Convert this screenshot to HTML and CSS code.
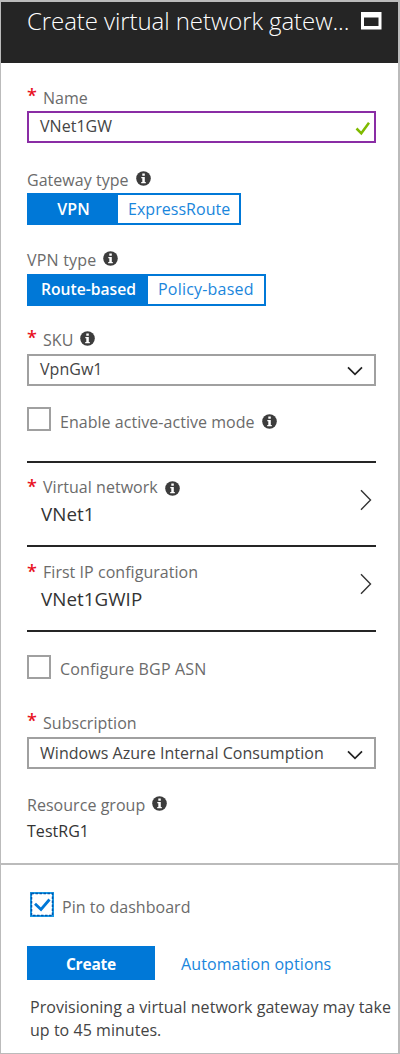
FILE: index.html
```html
<!DOCTYPE html>
<html lang="en">
<head>
<meta charset="utf-8">
<title>Create virtual network gateway</title>
<link rel="stylesheet" href="styles.css">
</head>
<body>
<svg class="defs" width="0" height="0">
  <symbol id="info" viewBox="0 0 15 15"><circle cx="7.5" cy="7.5" r="7.3" fill="#3c3c3c"/><path d="M6.3 2.600h2.500v2.100H6.300zM5.300 6h3.500v5h1v1.200H5.200V11h1.100V7.200h-1z" fill="#fff"/></symbol>
  <symbol id="down" viewBox="0 0 16 10"><path d="M1 1.300l7 7 7-7" fill="none" stroke="#222" stroke-width="1.7"/></symbol>
  <symbol id="right" viewBox="0 0 12 22"><path d="M1 1.200L10.500 11 1 20.700" fill="none" stroke="#333" stroke-width="1.4"/></symbol>
</svg>
<div class="blade">
  <header class="header">
    <h1 class="title">Create virtual network gatew...</h1>
    <svg class="maximize" width="21" height="18" viewBox="0 0 21 18"><path fill-rule="evenodd" d="M0 0h20.500v17.500H0zM3 5.500v8.500h14.500V5.500z" fill="#fff"/></svg>
  </header>
  <main class="form">
    <section class="field name">
      <div class="label required"><i class="star">*</i><span>Name</span></div>
      <div class="box active"><span>VNet1GW</span><svg class="valid" width="15" height="14" viewBox="0 0 15 14"><path d="M1.500 6.500l4.800 4.800L14 .8" fill="none" stroke="#7fba00" stroke-width="2.5"/></svg></div>
    </section>
    <section class="field gateway">
      <div class="label"><span>Gateway type</span><svg class="info"><use href="#info"/></svg></div>
      <div class="toggle"><b class="on vpn">VPN</b><span class="off">ExpressRoute</span></div>
    </section>
    <section class="field vpntype">
      <div class="label"><span class="wide">VPN type</span><svg class="info"><use href="#info"/></svg></div>
      <div class="toggle"><b class="on route">Route-based</b><span class="off wide">Policy-based</span></div>
    </section>
    <section class="field sku">
      <div class="label required"><i class="star">*</i><span>SKU</span><svg class="info"><use href="#info"/></svg></div>
      <div class="box"><span>VpnGw1</span><svg class="down"><use href="#down"/></svg></div>
    </section>
    <div class="check active-mode"><i class="tick"></i><span>Enable active-active mode</span><svg class="info"><use href="#info"/></svg></div>
    <div class="pickers">
      <section class="picker">
        <div class="picker-text">
          <div class="label required"><i class="star">*</i><span>Virtual network</span><svg class="info low"><use href="#info"/></svg></div>
          <div class="value">VNet1</div>
        </div>
        <svg class="right"><use href="#right"/></svg>
      </section>
      <section class="picker second">
        <div class="picker-text">
          <div class="label required"><i class="star">*</i><span>First IP configuration</span></div>
          <div class="value">VNet1GWIP</div>
        </div>
        <svg class="right"><use href="#right"/></svg>
      </section>
    </div>
    <div class="check bgp"><i class="tick"></i><span>Configure BGP ASN</span></div>
    <section class="field subscription">
      <div class="label required"><i class="star">*</i><span>Subscription</span></div>
      <div class="box"><span>Windows Azure Internal Consumption</span><svg class="down"><use href="#down"/></svg></div>
    </section>
    <section class="field group">
      <div class="label"><span>Resource group</span><svg class="info"><use href="#info"/></svg></div>
      <div class="static">TestRG1</div>
    </section>
  </main>
  <footer class="footer">
    <div class="check pin"><svg class="pinned" width="24" height="25" viewBox="0 0 24 25"><path d="M1 1h22v23H1z" fill="#fff" stroke="#1a9be6" stroke-width="2"/><path d="M1.500 1.500h21v22h-21z" fill="none" stroke="#0058b0" stroke-width="1.500" stroke-dasharray="2.500 1.500"/><path d="M5 11.800l6 5.700L19.500 7.500" fill="none" stroke="#0078d7" stroke-width="2.800"/></svg><span>Pin to dashboard</span></div>
    <div class="actions"><b class="create">Create</b><span class="link">Automation options</span></div>
    <p class="note">Provisioning a virtual network gateway may take<br>up to 45 minutes.</p>
  </footer>
</div>
</body>
</html>
```
FILE: styles.css
```css
* { box-sizing: border-box; }
body { margin: 0; background: #fff; font: 370 16px/20px "Open Sans", "Noto Sans", sans-serif; letter-spacing: 0.04px; color: #333; }
.defs { display: block; height: 0; }
.blade { width: 400px; height: 1054px; border: solid #bbb; border-width: 2px 2px 1px 1px; overflow: hidden; white-space: nowrap; }
.header { display: flex; height: 61px; background: #252525; padding: 0 16px 0 26px; justify-content: space-between; }
.title { margin: 2px 0 0; font-size: 24px; line-height: 34px; font-weight: 320; letter-spacing: -0.08px; color: #fff; }
.maximize { margin-top: 10px; flex: none; }
.form { height: 800px; padding: 25px 22px 0 26px; }
.field { display: flex; flex-direction: column; height: 56px; justify-content: space-between; }
.label { display: flex; height: 20px; color: #6b6b6b; }
.star { flex: none; width: 16px; height: 20px; font: 600 18px/20px "Open Sans", sans-serif; color: #e81123; margin-top: -1px; }
.wide { letter-spacing: 0.2px; }
.info { flex: none; width: 15px; height: 15px; margin: 1px 0 0 7px; }
.info.low { margin-top: 4px; }
.box { display: flex; justify-content: space-between; height: 32px; border: 2px solid #a0a0a0; padding: 3px 11px 0; color: #444; }
.box.active { border-color: #8a2da5; padding-right: 4px; }
.valid { margin-top: 6px; }
.down { width: 16px; height: 10px; margin-top: 7px; }
.toggle { display: flex; align-self: flex-start; height: 32px; border: 2px solid #0078d7; color: #1a86dc; }
.toggle .on { background: #0078d7; color: #fff; font-weight: 600; letter-spacing: 0; text-align: center; padding-top: 4px; }
.toggle .off { padding: 4px 0 0 10px; }
.vpn { width: 89px; }
.route { width: 119px; }
.gateway .toggle { width: 214px; }
.vpntype .toggle { width: 239px; }
.vpntype .toggle .on, .vpntype .toggle .off { padding-top: 3px; }
.vpntype .on { font-size: 15.700px; }
.name { height: 55px; }
.gateway { margin-top: 27px; height: 55px; }
.vpntype { margin-top: 25px; }
.sku { margin-top: 24px; }
.name .star, .subscription .star { margin-top: -3px; }
.sku .star { margin-top: -3px; }
.check { display: flex; height: 24px; color: #6b6b6b; }
.check span { margin-top: 5px; }
.check .info { margin-top: 7px; }
.tick { flex: none; width: 24px; height: 24px; border: 2px solid #a0a0a0; margin-right: 9px; }
.active-mode { margin-top: 21px; }
.pickers { margin-top: 30px; border-top: 2px solid #252525; }
.picker { display: flex; justify-content: space-between; height: 84px; border-bottom: 2px solid #252525; padding: 14px 4px 0 0; }
.picker.second { height: 85px; padding-top: 15px; }
.value { margin: 3px 0 0 14px; font-size: 18.800px; line-height: 28px; color: #333; }
.right { width: 12px; height: 22px; margin-top: 12px; }
.second .right { margin-top: 11px; }
.bgp { margin-top: 23px; }
.bgp span { margin-top: 4px; letter-spacing: 0.15px; }
.subscription { margin-top: 34px; }
.subscription .box { padding-top: 4px; }
.group { margin-top: 26px; height: 46px; }
.static { height: 20px; }
.footer { border-top: 2px solid #bbb; padding: 27px 0 0 26px; }
.pin { margin-left: 3px; }
.pinned { flex: none; margin-right: 8px; }
.actions { display: flex; margin-top: 30px; height: 34px; }
.create { width: 128px; height: 34px; background: #0078d7; color: #fff; font-size: 15.500px; text-align: center; line-height: 36px; letter-spacing: -0.2px; }
.link { color: #1a86dc; margin: 8px 0 0 26px; letter-spacing: 0.1px; }
.note { margin: 16px 0 0 3px; line-height: 23px; color: #444; }
```
